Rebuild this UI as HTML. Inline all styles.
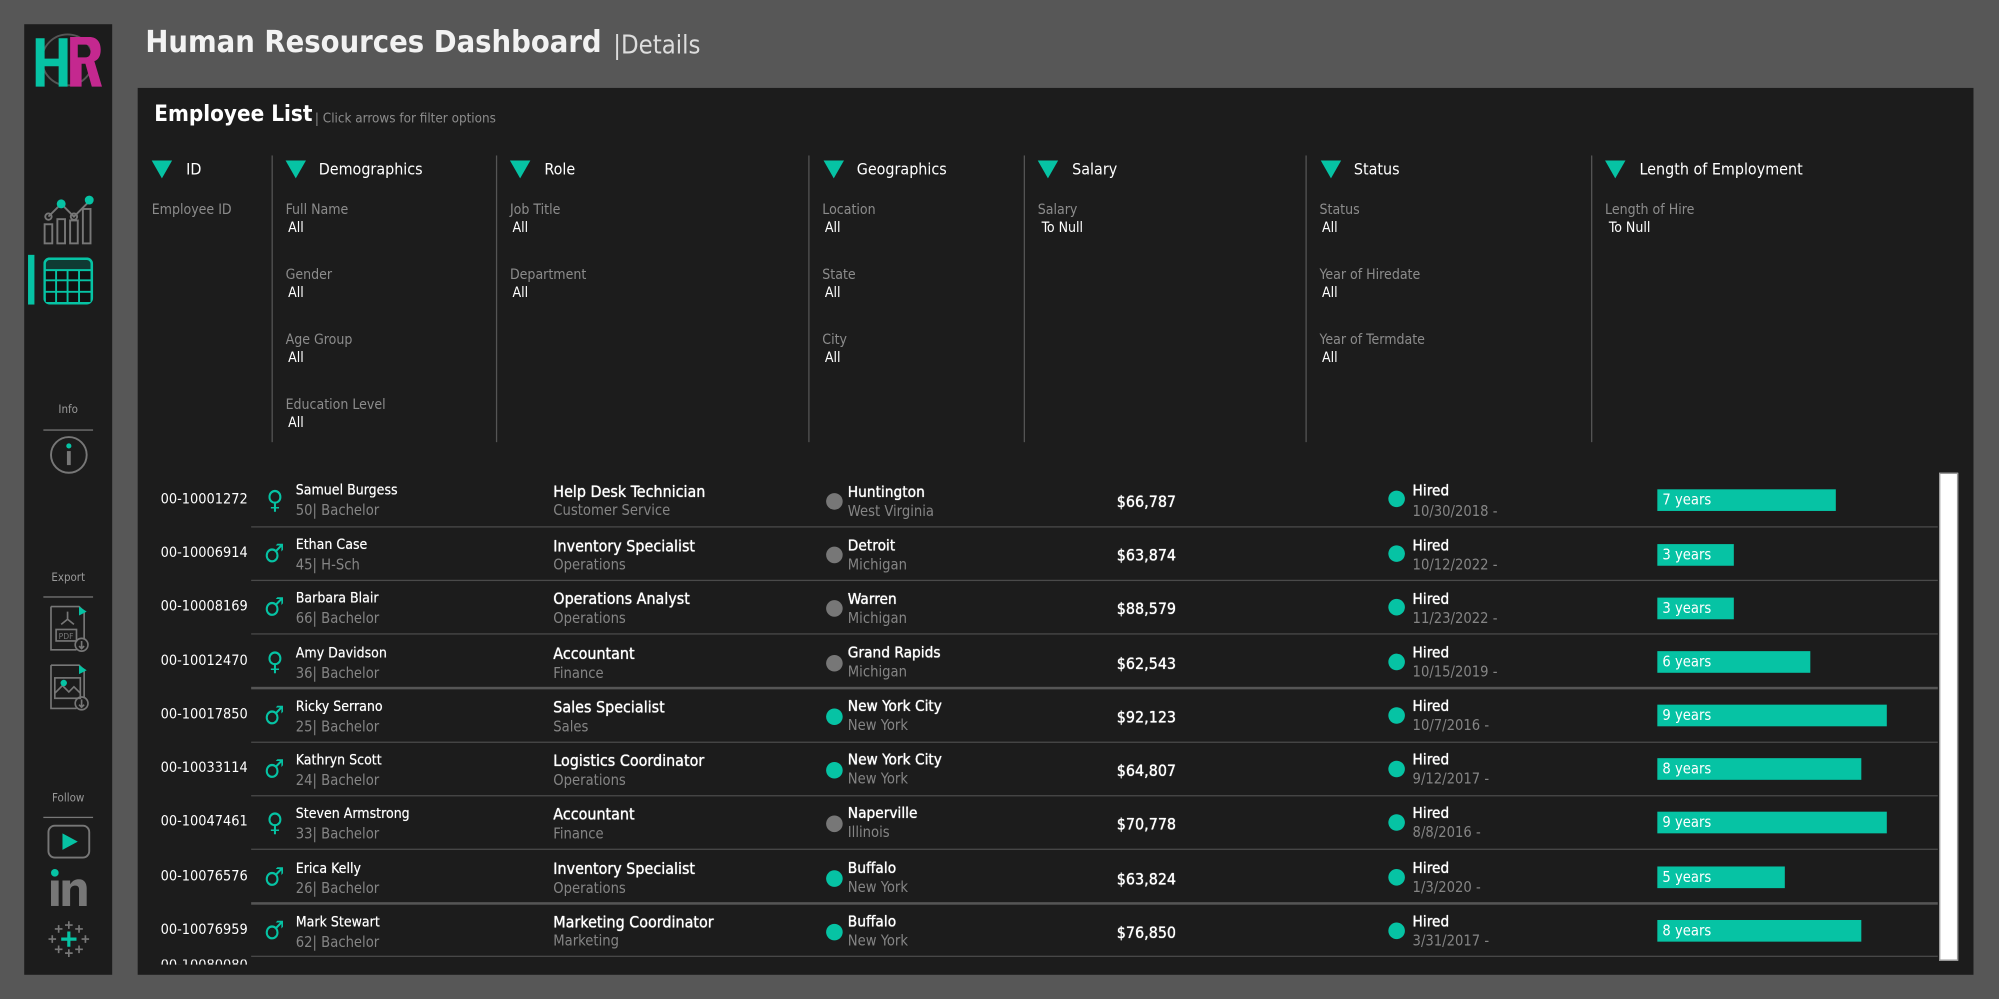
<!DOCTYPE html>
<html><head><meta charset="utf-8">
<style>
html,body{margin:0;padding:0;background:#575757;width:1999px;height:999px;overflow:hidden}
#w{position:absolute;left:0;top:0;width:1568px;height:784px;transform:scale(1.27487,1.27423);transform-origin:0 0;font-family:"DejaVu Sans Condensed","Liberation Sans Narrow","Liberation Sans",sans-serif;color:#fff}
.a{position:absolute;white-space:nowrap}
.side{left:19px;top:19px;width:69px;height:746px;background:#1c1c1c}
.panel{left:108px;top:69px;width:1440px;height:696px;background:#1c1c1c}
.tri{width:0;height:0;border-left:8px solid transparent;border-right:8px solid transparent;border-top:14px solid #06c3a4}
.hd{font-size:12.5px;color:#fff}
.lb{font-size:11px;color:#8c8c8c}
.vl{font-size:11px;color:#fff}
.dv{width:1px;background:#555;top:122px;height:225px}
.sep{left:197px;width:1323px;height:1px;background:#4a4a4a}
.id{font-size:11.3px;color:#fff}
.nm{font-size:11px;color:#fff;text-shadow:0 0 0.4px #fff}
.sub{font-size:11.5px;color:#858585}
.bt{font-size:12.5px;color:#fff;text-shadow:0 0 0.6px #fff,0 0 0.3px #fff}
.dot{width:13px;height:13px;border-radius:50%}
.bar{height:17px;background:#06c3a4;font-size:11.5px;line-height:17px;padding-left:4px;box-sizing:border-box}
.g{font-size:20px;color:#06c3a4;line-height:20px}
.sl{font-size:9px;color:#9a9a9a;width:69px;text-align:center;left:19px}
.ln{left:34px;width:39px;height:1px;background:#777}
</style></head><body><div id="w">
<div class="a side"></div>
<svg class="a" style="left:25px;top:22px" width="58" height="50" viewBox="0 0 58 50">
<circle cx="28" cy="25" r="20" fill="none" stroke="#555" stroke-width="1.5"/>
<path d="M30 7h15c6 0 9 4 9 10 0 5-2 8-5 9l6 20h-8l-5-18h-3v18h-9z M36 13v10h6c3 0 4-2 4-5s-1-5-4-5z" fill="#c4288f"/>
<path d="M3 8h7v16h11V8h7v38h-7V30H10v16H3z" fill="#06c3a4"/>
</svg>
<svg class="a" style="left:33px;top:152px" width="42" height="42" viewBox="0 0 42 42">
<g fill="none" stroke="#777" stroke-width="1.5"><rect x="2" y="24" width="6" height="15"/><rect x="12" y="20" width="6" height="19"/><rect x="22" y="21" width="6" height="18"/><rect x="32" y="12" width="6" height="27"/>
<path d="M5 18L15 8L25 18L37 6"/><circle cx="5" cy="18" r="2.5"/><circle cx="25" cy="18" r="2.5"/></g>
<circle cx="15" cy="8" r="3.5" fill="#06c3a4"/><circle cx="37" cy="5" r="3.5" fill="#06c3a4"/></svg>
<div class="a" style="left:22px;top:200px;width:5px;height:39px;background:#06c3a4"></div>
<svg class="a" style="left:34px;top:202px" width="40" height="38" viewBox="0 0 40 38">
<rect x="1" y="1" width="37" height="35" rx="4" fill="#0f3a33" stroke="#06c3a4" stroke-width="2"/>
<rect x="2" y="10" width="35" height="25" fill="#111"/>
<g stroke="#06c3a4" stroke-width="1.5" fill="none"><path d="M1 10H38M1 18H38M1 27H38M10 10V36M19 10V36M28 10V36"/></g></svg>
<div class="a sl" style="top:317px">Info</div>
<div class="a ln" style="top:337px"></div>
<svg class="a" style="left:39px;top:342px" width="30" height="30" viewBox="0 0 30 30"><circle cx="15" cy="15" r="14" fill="none" stroke="#777" stroke-width="1.5"/><circle cx="15" cy="8" r="2" fill="#06c3a4"/><rect x="13.5" y="12" width="3" height="11" fill="#777"/></svg>
<div class="a sl" style="top:449px">Export</div>
<div class="a ln" style="top:468px"></div>
<svg class="a" style="left:38px;top:474px" width="34" height="38" viewBox="0 0 34 38"><g fill="none" stroke="#777" stroke-width="1.3"><path d="M2 2H24L28 6V28M2 2V36H22"/><rect x="6" y="20" width="16" height="9"/><circle cx="26" cy="32" r="5"/><path d="M26 29V35M24 33L26 35L28 33"/><path d="M15 6V12L10 16M15 12L20 16"/></g><path d="M24 2L30 6L24 9z" fill="#06c3a4"/><text x="8" y="27.5" font-size="6" fill="#777" font-family="DejaVu Sans">PDF</text></svg>
<svg class="a" style="left:38px;top:520px" width="34" height="38" viewBox="0 0 34 38"><g fill="none" stroke="#777" stroke-width="1.3"><path d="M2 2H24L28 6V28M2 2V36H22"/><rect x="5" y="12" width="20" height="16"/><path d="M5 24L11 18L16 23L20 19L25 24"/><circle cx="26" cy="32" r="5"/><path d="M26 29V35M24 33L26 35L28 33"/></g><circle cx="12" cy="16" r="2.5" fill="#06c3a4"/><path d="M24 2L30 6L24 9z" fill="#06c3a4"/></svg>
<div class="a sl" style="top:622px">Follow</div>
<div class="a ln" style="top:641px"></div>
<svg class="a" style="left:37px;top:647px" width="34" height="27" viewBox="0 0 34 27"><rect x="1" y="1" width="32" height="25" rx="5" fill="none" stroke="#777" stroke-width="1.5"/><path d="M12 7L24 13.5L12 20z" fill="#06c3a4"/></svg>
<svg class="a" style="left:39px;top:681px" width="30" height="31" viewBox="0 0 30 31"><circle cx="4" cy="4" r="3" fill="#06c3a4"/><rect x="1" y="10" width="6" height="20" fill="#777"/><path d="M10 10h6v3c2-3 4-4 7-4 4 0 6 3 6 7v14h-6V17c0-2-1-3-3-3s-4 1-4 4v12h-6z" fill="#777"/></svg>
<svg class="a" style="left:38px;top:722px" width="32" height="30" viewBox="0 0 32 30"><g stroke="#777" stroke-width="1.3"><path d="M16 1V7M13 4H19M16 23V29M13 26H19M3 12V18M0 15H6M29 12V18M26 15H32M8 4V10M5 7H11M24 4V10M21 7H27M8 20V26M5 23H11M24 20V26M21 23H27"/></g><path d="M16 9V21M10 15H22" stroke="#06c3a4" stroke-width="2.5"/></svg>

<div class="a" style="left:114px;top:19px;font-size:24px;font-weight:bold;color:#f2f2f2">Human Resources Dashboard</div>
<div class="a" style="left:481px;top:23px;font-size:20px;color:#ddd">|Details</div>

<div class="a panel"></div>
<div class="a" style="left:121px;top:80px;font-size:17.5px;font-weight:bold">Employee List</div>
<div class="a" style="left:247px;top:87px;font-size:10.5px;color:#8c8c8c">| Click arrows for filter options</div>

<div class="a tri" style="left:119px;top:126px"></div><div class="a hd" style="left:146px;top:125px">ID</div>
<div class="a lb" style="left:119px;top:158px">Employee ID</div>
<div class="a dv" style="left:213px"></div>
<div class="a tri" style="left:224px;top:126px"></div><div class="a hd" style="left:250px;top:125px">Demographics</div>
<div class="a lb" style="left:224px;top:158px">Full Name</div><div class="a vl" style="left:226px;top:172px">All</div>
<div class="a lb" style="left:224px;top:209px">Gender</div><div class="a vl" style="left:226px;top:223px">All</div>
<div class="a lb" style="left:224px;top:260px">Age Group</div><div class="a vl" style="left:226px;top:274px">All</div>
<div class="a lb" style="left:224px;top:311px">Education Level</div><div class="a vl" style="left:226px;top:325px">All</div>
<div class="a dv" style="left:389px"></div>
<div class="a tri" style="left:400px;top:126px"></div><div class="a hd" style="left:427px;top:125px">Role</div>
<div class="a lb" style="left:400px;top:158px">Job Title</div><div class="a vl" style="left:402px;top:172px">All</div>
<div class="a lb" style="left:400px;top:209px">Department</div><div class="a vl" style="left:402px;top:223px">All</div>
<div class="a dv" style="left:634px"></div>
<div class="a tri" style="left:646px;top:126px"></div><div class="a hd" style="left:672px;top:125px">Geographics</div>
<div class="a lb" style="left:645px;top:158px">Location</div><div class="a vl" style="left:647px;top:172px">All</div>
<div class="a lb" style="left:645px;top:209px">State</div><div class="a vl" style="left:647px;top:223px">All</div>
<div class="a lb" style="left:645px;top:260px">City</div><div class="a vl" style="left:647px;top:274px">All</div>
<div class="a dv" style="left:803px"></div>
<div class="a tri" style="left:814px;top:126px"></div><div class="a hd" style="left:841px;top:125px">Salary</div>
<div class="a lb" style="left:814px;top:158px">Salary</div><div class="a vl" style="left:817px;top:172px">To Null</div>
<div class="a dv" style="left:1024px"></div>
<div class="a tri" style="left:1036px;top:126px"></div><div class="a hd" style="left:1062px;top:125px">Status</div>
<div class="a lb" style="left:1035px;top:158px">Status</div><div class="a vl" style="left:1037px;top:172px">All</div>
<div class="a lb" style="left:1035px;top:209px">Year of Hiredate</div><div class="a vl" style="left:1037px;top:223px">All</div>
<div class="a lb" style="left:1035px;top:260px">Year of Termdate</div><div class="a vl" style="left:1037px;top:274px">All</div>
<div class="a dv" style="left:1248px"></div>
<div class="a tri" style="left:1259px;top:126px"></div><div class="a hd" style="left:1286px;top:125px">Length of Employment</div>
<div class="a lb" style="left:1259px;top:158px">Length of Hire</div><div class="a vl" style="left:1262px;top:172px">To Null</div>

<div class="a" style="left:1521px;top:371px;width:15px;height:383px;background:#fff;border:1px solid #999;box-sizing:border-box"></div>

<div class="a" style="left:108px;top:378px;width:1412px">
<div class="a id" style="left:18px;top:7px">00-10001272</div><div class="a g" style="left:101px;top:4px">♀</div>
<div class="a nm" style="left:124px;top:0">Samuel Burgess</div><div class="a sub" style="left:124px;top:15px">50| Bachelor</div>
<div class="a bt" style="left:326px;top:0">Help Desk Technician</div><div class="a sub" style="left:326px;top:15px">Customer Service</div>
<div class="a dot" style="left:540px;top:9px;background:#777"></div><div class="a bt" style="left:557px;top:1px;font-size:12px">Huntington</div><div class="a sub" style="left:557px;top:16px">West Virginia</div>
<div class="a bt" style="left:768px;top:8px">$66,787</div>
<div class="a dot" style="left:981px;top:7px;background:#06c3a4"></div><div class="a bt" style="left:1000px;top:0;font-size:12px">Hired</div><div class="a sub" style="left:1000px;top:16px">10/30/2018 -</div>
<div class="a bar" style="left:1192px;top:6px;width:140px">7 years</div>
</div>
<div class="a sep" style="top:413px"></div>

<div class="a" style="left:108px;top:420px;width:1412px">
<div class="a id" style="left:18px;top:7px">00-10006914</div><div class="a g" style="left:99px;top:4px">♂</div>
<div class="a nm" style="left:124px;top:1px">Ethan Case</div><div class="a sub" style="left:124px;top:16px">45| H-Sch</div>
<div class="a bt" style="left:326px;top:1px">Inventory Specialist</div><div class="a sub" style="left:326px;top:16px">Operations</div>
<div class="a dot" style="left:540px;top:9px;background:#777"></div><div class="a bt" style="left:557px;top:1px;font-size:12px">Detroit</div><div class="a sub" style="left:557px;top:16px">Michigan</div>
<div class="a bt" style="left:768px;top:8px">$63,874</div>
<div class="a dot" style="left:981px;top:8px;background:#06c3a4"></div><div class="a bt" style="left:1000px;top:1px;font-size:12px">Hired</div><div class="a sub" style="left:1000px;top:16px">10/12/2022 -</div>
<div class="a bar" style="left:1192px;top:7px;width:60px">3 years</div>
</div>
<div class="a sep" style="top:455px"></div>

<div class="a" style="left:108px;top:462px;width:1412px">
<div class="a id" style="left:18px;top:7px">00-10008169</div><div class="a g" style="left:99px;top:4px">♂</div>
<div class="a nm" style="left:124px;top:1px">Barbara Blair</div><div class="a sub" style="left:124px;top:16px">66| Bachelor</div>
<div class="a bt" style="left:326px;top:0">Operations Analyst</div><div class="a sub" style="left:326px;top:16px">Operations</div>
<div class="a dot" style="left:540px;top:9px;background:#777"></div><div class="a bt" style="left:557px;top:1px;font-size:12px">Warren</div><div class="a sub" style="left:557px;top:16px">Michigan</div>
<div class="a bt" style="left:768px;top:8px">$88,579</div>
<div class="a dot" style="left:981px;top:8px;background:#06c3a4"></div><div class="a bt" style="left:1000px;top:1px;font-size:12px">Hired</div><div class="a sub" style="left:1000px;top:16px">11/23/2022 -</div>
<div class="a bar" style="left:1192px;top:7px;width:60px">3 years</div>
</div>
<div class="a sep" style="top:497px"></div>

<div class="a" style="left:108px;top:505px;width:1412px">
<div class="a id" style="left:18px;top:7px">00-10012470</div><div class="a g" style="left:101px;top:4px">♀</div>
<div class="a nm" style="left:124px;top:1px">Amy Davidson</div><div class="a sub" style="left:124px;top:16px">36| Bachelor</div>
<div class="a bt" style="left:326px;top:0">Accountant</div><div class="a sub" style="left:326px;top:16px">Finance</div>
<div class="a dot" style="left:540px;top:9px;background:#777"></div><div class="a bt" style="left:557px;top:0;font-size:12px">Grand Rapids</div><div class="a sub" style="left:557px;top:15px">Michigan</div>
<div class="a bt" style="left:768px;top:8px">$62,543</div>
<div class="a dot" style="left:981px;top:8px;background:#06c3a4"></div><div class="a bt" style="left:1000px;top:0;font-size:12px">Hired</div><div class="a sub" style="left:1000px;top:15px">10/15/2019 -</div>
<div class="a bar" style="left:1192px;top:6px;width:120px">6 years</div>
</div>
<div class="a sep" style="top:539px;height:2px;background:#555"></div>

<div class="a" style="left:108px;top:547px;width:1412px">
<div class="a id" style="left:18px;top:7px">00-10017850</div><div class="a g" style="left:99px;top:4px">♂</div>
<div class="a nm" style="left:124px;top:1px">Ricky Serrano</div><div class="a sub" style="left:124px;top:16px">25| Bachelor</div>
<div class="a bt" style="left:326px;top:0">Sales Specialist</div><div class="a sub" style="left:326px;top:16px">Sales</div>
<div class="a dot" style="left:540px;top:9px;background:#06c3a4"></div><div class="a bt" style="left:557px;top:0;font-size:12px">New York City</div><div class="a sub" style="left:557px;top:15px">New York</div>
<div class="a bt" style="left:768px;top:8px">$92,123</div>
<div class="a dot" style="left:981px;top:8px;background:#06c3a4"></div><div class="a bt" style="left:1000px;top:0;font-size:12px">Hired</div><div class="a sub" style="left:1000px;top:15px">10/7/2016 -</div>
<div class="a bar" style="left:1192px;top:6px;width:180px">9 years</div>
</div>
<div class="a sep" style="top:582px"></div>

<div class="a" style="left:108px;top:589px;width:1412px">
<div class="a id" style="left:18px;top:7px">00-10033114</div><div class="a g" style="left:99px;top:4px">♂</div>
<div class="a nm" style="left:124px;top:1px">Kathryn Scott</div><div class="a sub" style="left:124px;top:16px">24| Bachelor</div>
<div class="a bt" style="left:326px;top:0">Logistics Coordinator</div><div class="a sub" style="left:326px;top:16px">Operations</div>
<div class="a dot" style="left:540px;top:9px;background:#06c3a4"></div><div class="a bt" style="left:557px;top:0;font-size:12px">New York City</div><div class="a sub" style="left:557px;top:15px">New York</div>
<div class="a bt" style="left:768px;top:8px">$64,807</div>
<div class="a dot" style="left:981px;top:8px;background:#06c3a4"></div><div class="a bt" style="left:1000px;top:0;font-size:12px">Hired</div><div class="a sub" style="left:1000px;top:15px">9/12/2017 -</div>
<div class="a bar" style="left:1192px;top:6px;width:160px">8 years</div>
</div>
<div class="a sep" style="top:624px"></div>

<div class="a" style="left:108px;top:631px;width:1412px">
<div class="a id" style="left:18px;top:7px">00-10047461</div><div class="a g" style="left:101px;top:4px">♀</div>
<div class="a nm" style="left:124px;top:1px">Steven Armstrong</div><div class="a sub" style="left:124px;top:16px">33| Bachelor</div>
<div class="a bt" style="left:326px;top:0">Accountant</div><div class="a sub" style="left:326px;top:16px">Finance</div>
<div class="a dot" style="left:540px;top:9px;background:#777"></div><div class="a bt" style="left:557px;top:0;font-size:12px">Naperville</div><div class="a sub" style="left:557px;top:15px">Illinois</div>
<div class="a bt" style="left:768px;top:8px">$70,778</div>
<div class="a dot" style="left:981px;top:8px;background:#06c3a4"></div><div class="a bt" style="left:1000px;top:0;font-size:12px">Hired</div><div class="a sub" style="left:1000px;top:15px">8/8/2016 -</div>
<div class="a bar" style="left:1192px;top:6px;width:180px">9 years</div>
</div>
<div class="a sep" style="top:666px"></div>

<div class="a" style="left:108px;top:674px;width:1412px">
<div class="a id" style="left:18px;top:7px">00-10076576</div><div class="a g" style="left:99px;top:4px">♂</div>
<div class="a nm" style="left:124px;top:1px">Erica Kelly</div><div class="a sub" style="left:124px;top:16px">26| Bachelor</div>
<div class="a bt" style="left:326px;top:0">Inventory Specialist</div><div class="a sub" style="left:326px;top:16px">Operations</div>
<div class="a dot" style="left:540px;top:9px;background:#06c3a4"></div><div class="a bt" style="left:557px;top:0;font-size:12px">Buffalo</div><div class="a sub" style="left:557px;top:15px">New York</div>
<div class="a bt" style="left:768px;top:8px">$63,824</div>
<div class="a dot" style="left:981px;top:8px;background:#06c3a4"></div><div class="a bt" style="left:1000px;top:0;font-size:12px">Hired</div><div class="a sub" style="left:1000px;top:15px">1/3/2020 -</div>
<div class="a bar" style="left:1192px;top:6px;width:100px">5 years</div>
</div>
<div class="a sep" style="top:708px;height:2px;background:#555"></div>

<div class="a" style="left:108px;top:716px;width:1412px">
<div class="a id" style="left:18px;top:7px">00-10076959</div><div class="a g" style="left:99px;top:4px">♂</div>
<div class="a nm" style="left:124px;top:1px">Mark Stewart</div><div class="a sub" style="left:124px;top:16px">62| Bachelor</div>
<div class="a bt" style="left:326px;top:0">Marketing Coordinator</div><div class="a sub" style="left:326px;top:15px">Marketing</div>
<div class="a dot" style="left:540px;top:9px;background:#06c3a4"></div><div class="a bt" style="left:557px;top:0;font-size:12px">Buffalo</div><div class="a sub" style="left:557px;top:15px">New York</div>
<div class="a bt" style="left:768px;top:8px">$76,850</div>
<div class="a dot" style="left:981px;top:8px;background:#06c3a4"></div><div class="a bt" style="left:1000px;top:0;font-size:12px">Hired</div><div class="a sub" style="left:1000px;top:15px">3/31/2017 -</div>
<div class="a bar" style="left:1192px;top:6px;width:160px">8 years</div>
</div>
<div class="a sep" style="top:750px"></div>
<div class="a" style="left:126px;top:753px;width:80px;height:4px;overflow:hidden"><div class="id" style="margin-top:-2px">00-10080080</div></div>
</div></body></html>
